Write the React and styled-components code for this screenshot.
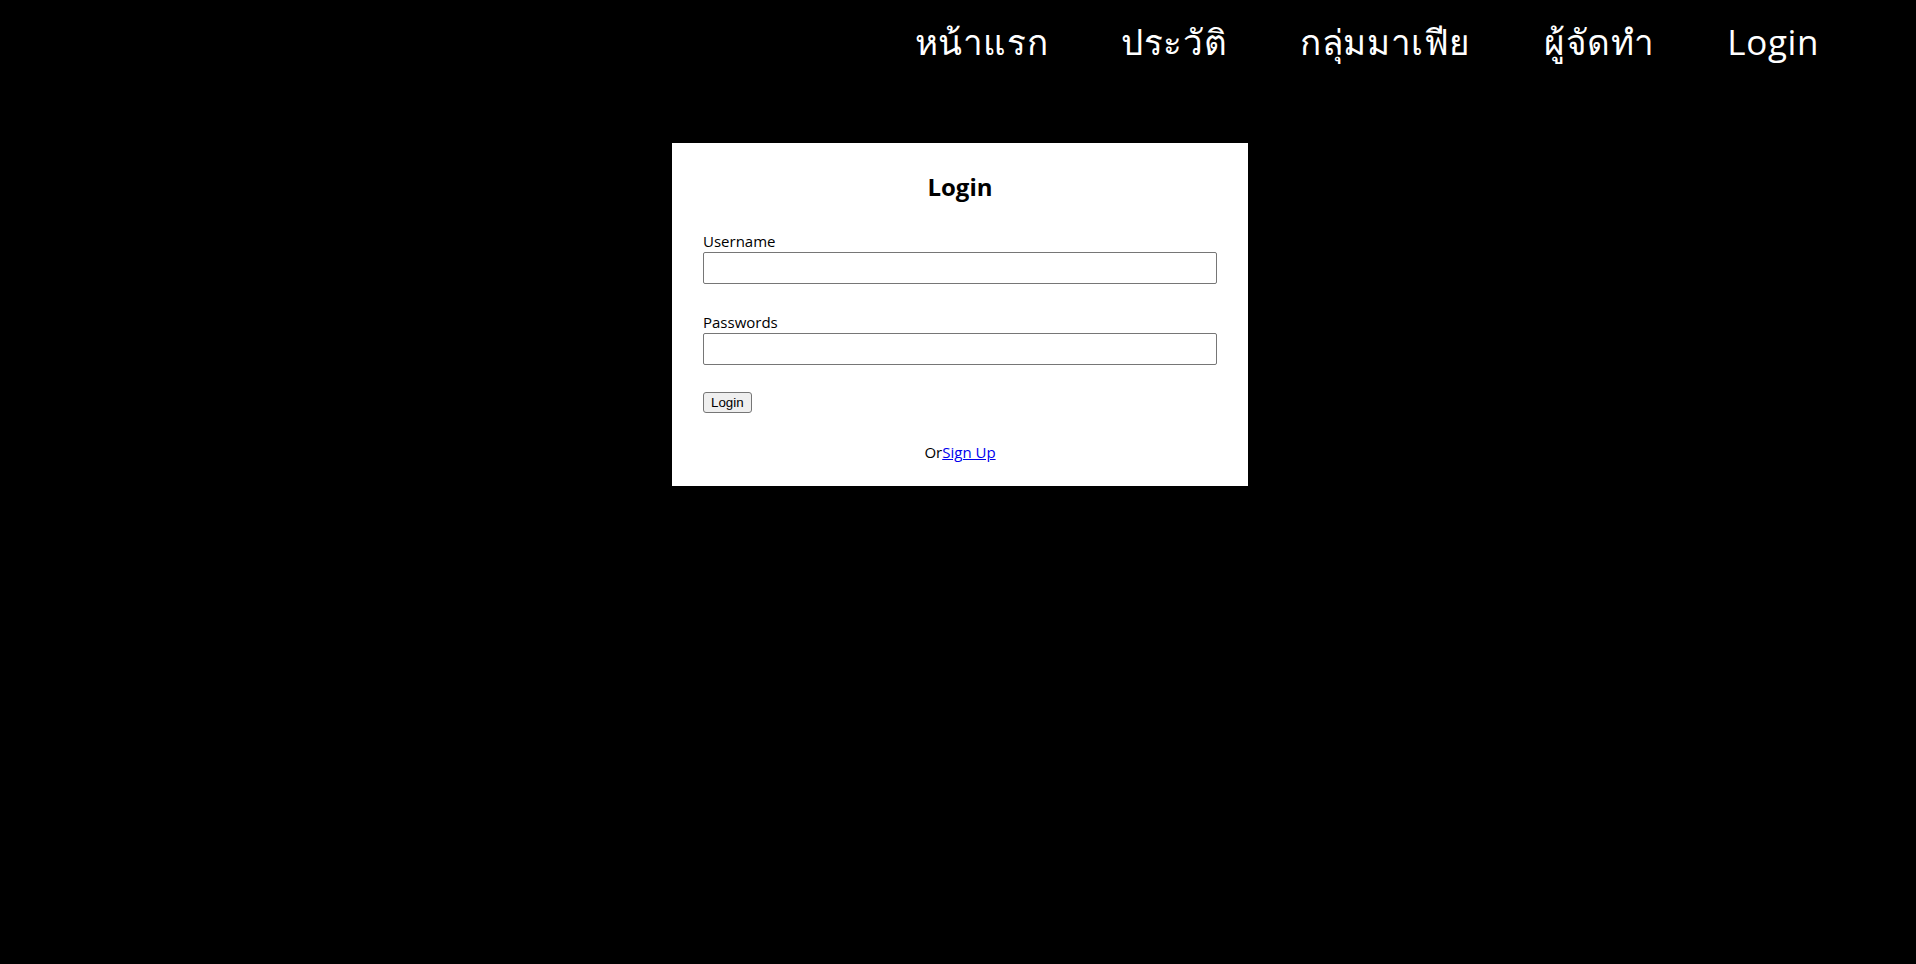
import React from "react";
import styled, {createGlobalStyle} from "styled-components";

const GlobalStyle = createGlobalStyle`
  html, body {
    margin: 0;
    padding: 0;
    background: #000;
    min-height: 100%;
  }
  body {
    font-family: "Open Sans", "Noto Sans", sans-serif;
  }
`

export default function App() {
    return (
        <Page>
            <GlobalStyle/>
            <NavBar>
                <NavItem href="#">หน้าแรก</NavItem>
                <NavItem href="#">ประวัติ</NavItem>
                <NavItem href="#">กลุ่มมาเฟีย</NavItem>
                <NavItem href="#">ผู้จัดทำ</NavItem>
                <NavItem href="#">Login</NavItem>
            </NavBar>
            <LoginCard>
                <Title>Login</Title>
                <Field>
                    <Label htmlFor="username">Username</Label>
                    <Input id="username" type="text"/>
                </Field>
                <Field>
                    <Label htmlFor="password">Passwords</Label>
                    <Input id="password" type="password"/>
                </Field>
                <SubmitButton type="button">Login</SubmitButton>
                <Footer>
                    Or<SignUpLink href="#">Sign Up</SignUpLink>
                </Footer>
            </LoginCard>
        </Page>
    )
}

const Page = styled.div`
  min-height: 964px;
  background: #000;
  display: flex;
  flex-direction: column;
  align-items: center;
  padding-left: 4px;
`

const NavBar = styled.nav`
  align-self: stretch;
  display: flex;
  justify-content: flex-end;
  align-items: center;
  gap: 73px;
  height: 82px;
  padding-right: 97px;
`

const NavItem = styled.a`
  color: #fff;
  text-decoration: none;
  font-size: 35px;
  letter-spacing: 0.6px;
  line-height: 1;
`

const LoginCard = styled.div`
  margin-top: 61px;
  width: 576px;
  box-sizing: border-box;
  padding: 28px 31px 24px;
  background: #fff;
  display: flex;
  flex-direction: column;
`

const Title = styled.h2`
  margin: 0 0 28px;
  text-align: center;
  font-size: 24px;
  font-weight: 700;
  line-height: 32px;
  color: #000;
`

const Field = styled.div`
  display: flex;
  flex-direction: column;
  margin-bottom: 28px;
`

const Label = styled.label`
  font-size: 15px;
  line-height: 20px;
  color: #000;
  margin-bottom: 1px;
`

const Input = styled.input`
  box-sizing: border-box;
  height: 32px;
  width: 100%;
  border: 1px solid #767676;
  border-radius: 2px;
  padding: 1px 4px;
  font-size: 14px;
`

const SubmitButton = styled.button`
  align-self: flex-start;
  height: 21px;
  margin-top: -1px;
  padding: 1px 7px;
  font-family: "Liberation Sans", Arial, sans-serif;
  font-size: 13.33px;
  color: #000;
  background: #efefef;
  border: 1px solid #767676;
  border-radius: 3px;
`

const Footer = styled.div`
  margin-top: 29px;
  text-align: center;
  font-size: 15px;
  line-height: 20px;
  color: #000;
`

const SignUpLink = styled.a`
  color: #00e;
  text-decoration: underline;
`
